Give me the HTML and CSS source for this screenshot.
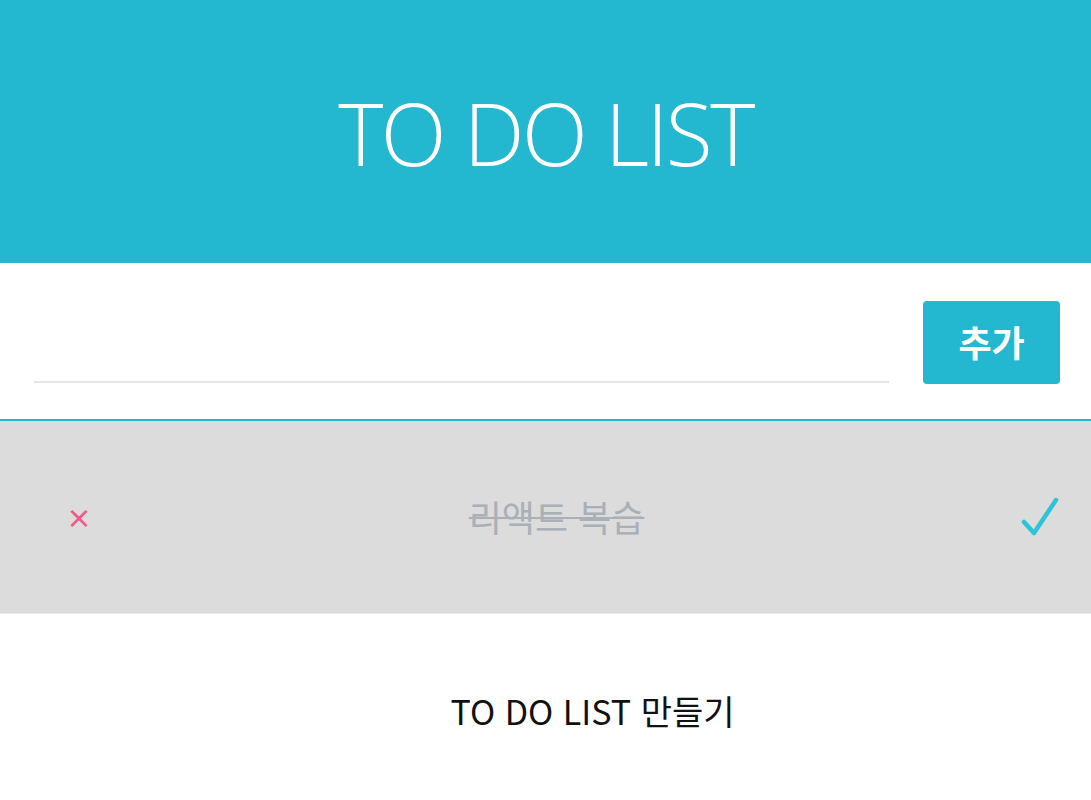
FILE: index.html
```html
<!DOCTYPE html>
<html lang="ko">
<head>
<meta charset="utf-8">
<title>TO DO LIST</title>
<link rel="stylesheet" href="styles.css">
</head>
<body>
<div class="app">
  <header class="header">
    <h1 class="title">TO DO LIST</h1>
  </header>
  <form class="form">
    <input class="input" type="text" aria-label="할 일">
    <button class="add" type="button">추가</button>
  </form>
  <ul class="list">
    <li class="item done">
      <span class="remove">×</span>
      <span class="text">리액트 복습</span>
      <span class="check">
        <svg width="40" height="42" viewBox="0 0 40 42"><path d="M4 27 L14 38 L36 5" fill="none" stroke="#2ec3d9" stroke-width="4.5" stroke-linecap="round" stroke-linejoin="round"/></svg>
      </span>
    </li>
    <li class="item pending">
      <span class="remove"></span>
      <span class="text">TO DO LIST 만들기</span>
      <span class="check"></span>
    </li>
  </ul>
</div>
</body>
</html>
```

FILE: styles.css
```css
* { box-sizing: border-box; }
html, body { margin: 0; padding: 0; background: #fff; }
body { font-family: "Open Sans", "Noto Sans CJK KR", sans-serif; }

.header {
  height: 263px;
  background: #23b7d0;
  display: flex;
  align-items: center;
  justify-content: center;
}
.title {
  margin: 0;
  color: #fff;
  font-family: "Open Sans", sans-serif;
  font-weight: 300;
  font-size: 86px;
  letter-spacing: -2.5px;
  line-height: 1;
  padding-top: 3px;
}

.form {
  height: 158px;
  display: flex;
  align-items: flex-end;
  padding: 0 31px 36px 34px;
  gap: 34px;
  border-bottom: 2px solid #23b7d0;
}
.input {
  flex: 1;
  height: 44px;
  border: none;
  border-bottom: 2px solid #e6e6e6;
  outline: none;
  font-size: 24px;
  background: transparent;
}
.add {
  width: 137px;
  height: 83px;
  border: none;
  border-radius: 4px;
  background: #23b7d0;
  color: #fff;
  font-family: "Noto Sans CJK KR", sans-serif;
  font-weight: 700;
  font-size: 36px;
  line-height: 1;
  margin-bottom: -1px;
  padding: 0 0 4px;
}

.list { list-style: none; margin: 0; padding: 0; }
.item {
  height: 193px;
  display: flex;
  align-items: center;
  border-bottom: 1px solid #ececec;
  font-family: "Noto Sans CJK KR", sans-serif;
}
.item.done { background: #dcdcdc; }
.remove {
  width: 160px;
  padding-left: 66px;
  color: #ef5a88;
  font-size: 26px;
  font-weight: 700;
  line-height: 1;
}
.text {
  flex: 1;
  text-align: center;
  font-size: 34px;
  line-height: 1;
  color: #111;
}
.done .text {
  font-size: 36px;
  color: #a9b0b8;
  text-decoration: line-through;
  text-decoration-thickness: 2px;
  padding-left: 22px;
  padding-bottom: 2px;
}
.pending .text {
  padding-left: 94px;
  padding-top: 2px;
}
.check {
  width: 160px;
  display: flex;
  justify-content: flex-end;
  padding-right: 31px;
  padding-bottom: 2px;
}
```
